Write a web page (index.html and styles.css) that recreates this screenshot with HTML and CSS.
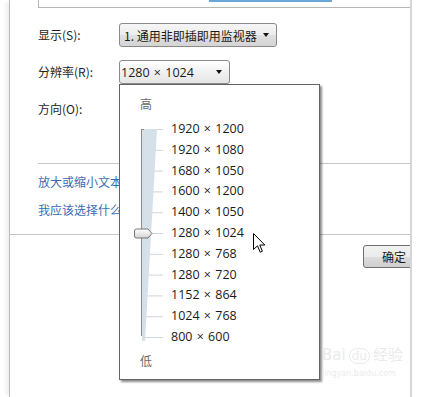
FILE: index.html
```html
<!DOCTYPE html>
<html lang="zh-CN">
<head>
    <meta charset="UTF-8">
    <meta name="viewport" content="width=device-width, initial-scale=1.0">
    <title>屏幕分辨率</title>
    <link rel="stylesheet" href="styles.css">
</head>

<body>
    <div class="dialog">
        <!-- monitor preview box, only its bottom edge is visible -->
        <div class="preview">
            <div class="preview-monitor"></div>
        </div>

        <div class="settings">
            <label class="field-label">显示(S):</label>
            <div class="combo combo-wide">
                <span>1. 通用非即插即用监视器</span>
                <span class="arrow"></span>
            </div>

            <label class="field-label">分辨率(R):</label>
            <div class="combo combo-open">
                <span class="num">1280 × 1024</span>
                <span class="arrow"></span>
            </div>

            <label class="field-label">方向(O):</label>
            <div class="combo combo-hidden">
                <span class="arrow"></span>
            </div>
        </div>

        <div class="links">
            <a class="link">放大或缩小文本</a>
            <a class="link">我应该选择什么</a>
        </div>

        <div class="footer">
            <button class="btn">确定</button>
        </div>
    </div>

    <!-- open resolution dropdown -->
    <div class="popup">
        <div class="cap">高</div>
        <div class="scale">
            <svg class="slider" width="51" height="229" viewBox="0 0 51 229">
                <defs>
                    <linearGradient id="thumb" x1="0" y1="0" x2="0" y2="1">
                        <stop offset="0" stop-color="#ffffff"/>
                        <stop offset="1" stop-color="#d4d4d4"/>
                    </linearGradient>
                </defs>
                <g stroke="#cfd6dd" stroke-width="1">
                    <line x1="23" y1="10.5" x2="43" y2="10.5"/>
                    <line x1="23" y1="31.3" x2="43" y2="31.3"/>
                    <line x1="23" y1="52.1" x2="43" y2="52.1"/>
                    <line x1="23" y1="72.9" x2="43" y2="72.9"/>
                    <line x1="23" y1="93.7" x2="43" y2="93.7"/>
                    <line x1="23" y1="114.5" x2="43" y2="114.5"/>
                    <line x1="23" y1="135.3" x2="43" y2="135.3"/>
                    <line x1="23" y1="156.1" x2="43" y2="156.1"/>
                    <line x1="23" y1="176.9" x2="43" y2="176.9"/>
                    <line x1="23" y1="197.7" x2="43" y2="197.7"/>
                    <line x1="23" y1="218.5" x2="43" y2="218.5"/>
                </g>
                <polygon points="22,10 37,10 25,222 22,222" fill="#d5e0e9"/>
                <line x1="21.5" y1="10" x2="21.5" y2="217" stroke="#8c8c8c"/>
                <line x1="21" y1="10.5" x2="24" y2="10.5" stroke="#8c8c8c"/>
                <path d="M16.5,110 H28 L32,114.5 L28,119 H16.5 Q14.5,119 14.5,117 V112 Q14.5,110 16.5,110 Z"
                      fill="url(#thumb)" stroke="#767676"/>
            </svg>
            <ul class="res-list">
                <li>1920 × 1200</li>
                <li>1920 × 1080</li>
                <li>1680 × 1050</li>
                <li>1600 × 1200</li>
                <li>1400 × 1050</li>
                <li>1280 × 1024</li>
                <li>1280 × 768</li>
                <li>1280 × 720</li>
                <li>1152 × 864</li>
                <li>1024 × 768</li>
                <li>800 × 600</li>
            </ul>
        </div>
        <div class="cap cap-low">低</div>
    </div>

    <svg class="cursor" width="13" height="21" viewBox="0 0 13 21">
        <path d="M0.5,0.5 V16.5 L4.5,12.8 L7.2,19.2 L9.4,18.3 L6.8,12 H11.8 Z" fill="#ffffff" stroke="#000000" stroke-width="1"/>
    </svg>

    <div class="watermark">
        <div class="wm-logo">Bai<span class="wm-paw">du</span>经验</div>
        <div class="wm-url">jingyan.baidu.com</div>
    </div>
</body>
</html>
```

FILE: styles.css
```css
/* page */
body {
    margin: 0;
    width: 438px;
    height: 397px;
    overflow: hidden;
    position: relative;
    background: #ffffff;
    font-family: "Noto Sans CJK SC", sans-serif;
    font-size: 12px;
    color: #1e1e1e;
}

/* dialog body with the grey side edges */
.dialog {
    margin-left: 9px;
    width: 403px;
    height: 397px;
    box-sizing: border-box;
    border-left: 1px solid #bdbdbd;
    border-right: 2px solid #d6d6d6;
    box-shadow: -5px 0 4px -2px rgba(0, 0, 0, 0.07);
    overflow: hidden;
}

.preview {
    margin-left: 28px;
    height: 7px;
    border-left: 1px solid #b4b4b4;
    border-bottom: 1px solid #b4b4b4;
}

.preview-monitor {
    margin-left: 170px;
    width: 123px;
    height: 2px;
    background: #6aa6d6;
}

/* form rows */
.settings {
    display: grid;
    grid-template-columns: 81px auto;
    grid-auto-rows: 24px;
    row-gap: 13px;
    justify-items: start;
    align-items: center;
    margin: 15px 0 0 28px;
}

.field-label {
    line-height: 24px;
    color: #1e1e1e;
    white-space: nowrap;
}

.combo {
    height: 24px;
    box-sizing: border-box;
    display: flex;
    align-items: center;
    gap: 6px;
    padding: 0 7px 0 4px;
    border: 1px solid #8a8a8a;
    border-radius: 3px;
    background: linear-gradient(#f6f6f6, #ececec 50%, #e0e0e0 51%, #d4d4d4);
    color: #1a1a1a;
    white-space: nowrap;
}

.combo-wide {
    width: 158px;
}

.combo-open {
    width: 111px;
    justify-content: space-between;
    padding-left: 1px;
    background: linear-gradient(#ffffff, #f1f1f1 50%, #e6e6e6);
}

.combo-hidden {
    width: 111px;
}

.num {
    font-family: "Open Sans", sans-serif;
    font-size: 12.5px;
    word-spacing: 1px;
}

.arrow {
    width: 0;
    height: 0;
    margin-left: auto;
    border-left: 3.5px solid transparent;
    border-right: 3.5px solid transparent;
    border-top: 4px solid #111111;
}

/* help links, partly hidden by the open dropdown */
.links {
    margin: 42px 0 0 28px;
    padding-top: 9px;
    border-top: 1px solid #c6c6c6;
    display: flex;
    flex-direction: column;
    align-items: flex-start;
    gap: 10px;
}

.link {
    white-space: nowrap;
    line-height: 18px;
    color: #3a6db3;
}

.footer {
    margin-top: 15px;
    padding-top: 10px;
    border-top: 1px solid #c6c6c6;
}

.btn {
    display: block;
    margin-left: 353px;
    width: 76px;
    height: 23px;
    padding: 0 0 0 18px;
    border: 1px solid #707070;
    border-radius: 3px;
    background: linear-gradient(#f2f2f2, #ebebeb 50%, #dddddd 51%, #cfcfcf);
    font-family: "Noto Sans CJK SC", sans-serif;
    font-size: 12px;
    color: #1a1a1a;
    text-align: left;
}

/* dropdown over the dialog */
.popup {
    position: absolute;
    left: 119px;
    top: 84px;
    width: 201px;
    height: 296px;
    box-sizing: border-box;
    padding-top: 10px;
    border: 1px solid #646464;
    background: #ffffff;
    box-shadow: 2px 2px 2px rgba(0, 0, 0, 0.45);
}

.cap {
    padding-left: 20px;
    line-height: 18px;
    color: #6a6a6a;
}

.cap-low {
    margin-top: 4px;
}

.scale {
    display: flex;
    margin-top: 6px;
}

.slider {
    display: block;
    flex: none;
}

.res-list {
    list-style: none;
    margin: 0;
    padding: 0;
    font-family: "Open Sans", sans-serif;
    font-size: 12.5px;
    word-spacing: 1px;
    color: #1a1a1a;
}

.res-list li {
    height: 20.8px;
    line-height: 20.8px;
}

.cursor {
    position: absolute;
    left: 253px;
    top: 233px;
}

/* faint site watermark */
.watermark {
    position: absolute;
    left: 322px;
    top: 344px;
    color: #ebebeb;
    font-family: "DejaVu Sans", sans-serif;
}

.wm-logo {
    font-size: 15px;
    line-height: 22px;
    white-space: nowrap;
}

.wm-paw {
    margin: 0 3px;
    border: 1px solid #ebebeb;
    border-radius: 10px;
    padding: 0 2px;
    font-size: 12px;
}

.wm-url {
    font-size: 8px;
    line-height: 14px;
}
```
